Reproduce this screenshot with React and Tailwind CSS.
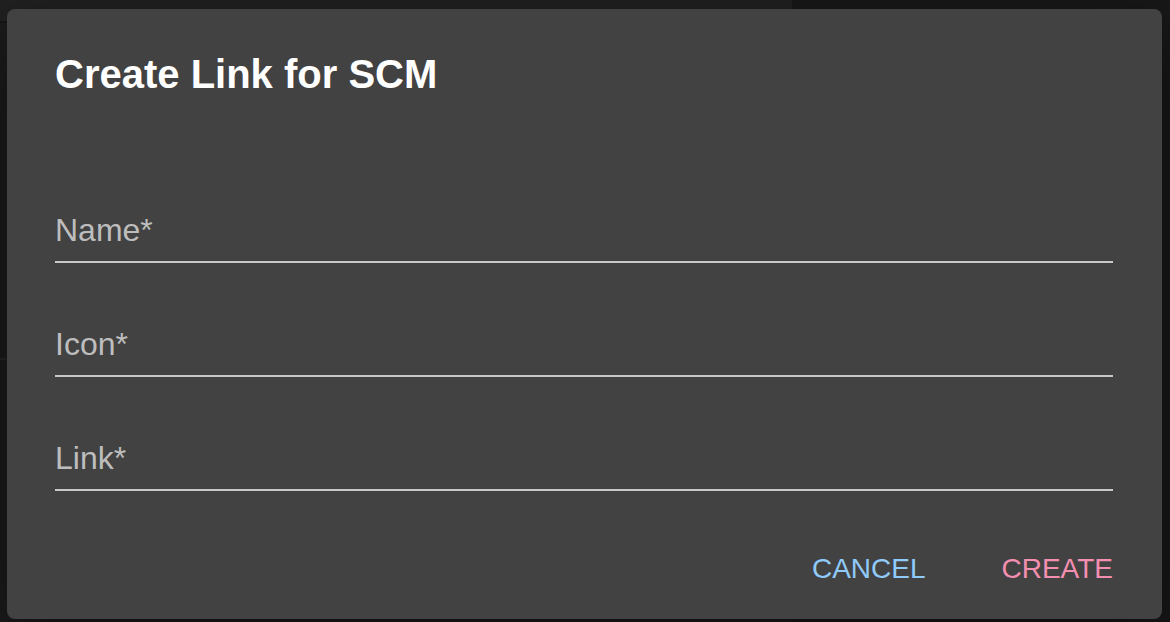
import React from "react";

const fields = ["Name*", "Icon*", "Link*"];

const Field = ({ label }) => (
  <div className="border-b-2 border-[#c8c8c8] pb-[13px]">
    <span className="block text-[32px] leading-[36px] text-[#bdbdbd]">
      {label}
    </span>
  </div>
);

const App = () => {
  return (
    <div
      className="relative h-[622px] w-[1170px] overflow-hidden bg-[#1c1c1c]"
      style={{ fontFamily: '"Liberation Sans", Arial, sans-serif' }}
    >
      {/* page behind the backdrop */}
      <div className="absolute left-0 top-0 h-[21px] w-[792px] bg-[#212121]" />
      <div className="absolute left-0 top-[21px] h-[2px] w-[792px] bg-[#161616]" />
      <div className="absolute left-[792px] top-0 h-[622px] w-[378px] bg-[#181818]" />
      <div className="absolute left-0 top-[358px] h-[2px] w-[7px] bg-[#262626]" />

      {/* dialog */}
      <div className="absolute left-[7px] top-[9px] flex h-[610px] w-[1155px] flex-col rounded-lg bg-[#424242] shadow-[0_22px_70px_rgba(0,0,0,0.5)]">
        <h2 className="px-[48px] pt-[33px] text-[40px] font-bold leading-[64px] text-white">
          Create Link for SCM
        </h2>

        <div className="mt-[106px] flex flex-col gap-[63px] pl-[48px] pr-[49px]">
          {fields.map((f) => (
            <Field key={f} label={f} />
          ))}
        </div>

        <div className="mt-[53px] flex justify-end gap-[76px] pr-[49px]">
          <button className="text-[28px] leading-[49px] text-[#90caf9] uppercase">
            Cancel
          </button>
          <button className="text-[28px] leading-[49px] text-[#f48fb1] uppercase">
            Create
          </button>
        </div>
      </div>
    </div>
  );
};

export default App;
